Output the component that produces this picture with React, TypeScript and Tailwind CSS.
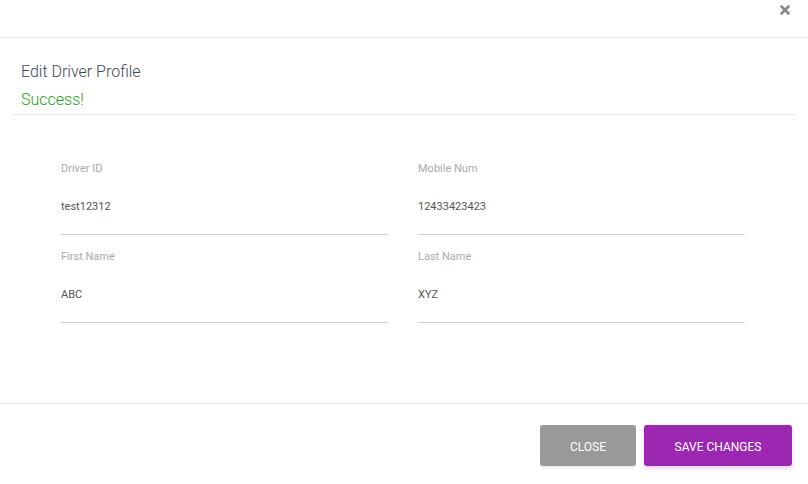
import { X } from 'lucide-react';

function Field({ label, value }: { label: string; value: string }) {
  return (
    <div className="flex flex-col">
      <label className="text-[11px] leading-[14px] text-[#aaaaaa] pt-[1px]">{label}</label>
      <div className="mt-[24px] text-[11px] leading-[14px] text-[#555555]">{value}</div>
      <div className="mt-[20px] h-px bg-[#d2d2d2]" />
    </div>
  );
}

export default function App() {
  return (
    <div className="w-[808px] h-[484px] bg-white font-['Roboto',sans-serif] flex flex-col">
      <div className="h-[38px] border-b border-[#e9e9e9] flex justify-end items-start pr-[15px] pt-[2px]">
        <button className="text-[#888888] w-[16px] h-[16px] flex items-center justify-center">
          <X className="w-[14px] h-[14px]" strokeWidth={4.5} />
        </button>
      </div>
      <div className="px-[13px]">
        <div className="border-b border-[#e5e5e5] px-[8px] pt-[23px] pb-[3px]">
          <h4 className="text-[16px] leading-[22px] font-light text-[#3c4858]">Edit Driver Profile</h4>
          <p className="mt-[6px] text-[16px] leading-[22px] font-light text-[#1b9e1b]">Success!</p>
        </div>
      </div>
      <div className="flex-1 px-[61px] pt-[46px]">
        <div className="grid grid-cols-2 gap-x-[30px] gap-y-[14px] w-[684px]">
          <Field label="Driver ID" value="test12312" />
          <Field label="Mobile Num" value="12433423423" />
          <Field label="First Name" value="ABC" />
          <Field label="Last Name" value="XYZ" />
        </div>
      </div>
      <div className="h-[81px] border-t border-[#e9e9e9] flex justify-end items-start gap-[8px] pr-[16px] pt-[21px]">
        <button className="w-[96px] h-[41px] pt-[2px] rounded-[3px] bg-[#999999] text-white text-[12px] uppercase shadow-[0_2px_2px_rgba(153,153,153,0.2)]">
          Close
        </button>
        <button className="w-[148px] h-[41px] pt-[2px] rounded-[3px] bg-[#9c27b0] text-white text-[12px] uppercase shadow-[0_2px_4px_rgba(156,39,176,0.25)]">
          Save Changes
        </button>
      </div>
    </div>
  );
}
